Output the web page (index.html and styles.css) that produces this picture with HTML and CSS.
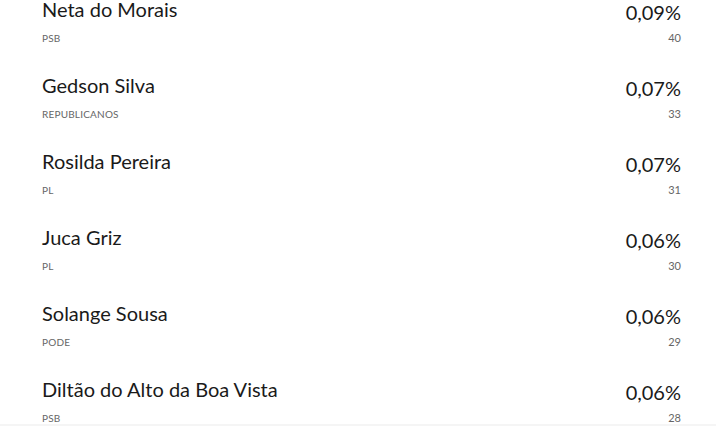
FILE: index.html
```html
<!DOCTYPE html>
<html lang="pt-BR">
<head>
<meta charset="utf-8">
<link rel="stylesheet" href="styles.css">
</head>
<body>
<main class="page">
  <ul class="list">
    <li class="row">
      <div class="info"><span class="name">Neta do Morais</span><span class="party">PSB</span></div>
      <div class="result"><span class="pct">0,09%</span><span class="votes">40</span></div>
    </li>
    <li class="row">
      <div class="info"><span class="name">Gedson Silva</span><span class="party">REPUBLICANOS</span></div>
      <div class="result"><span class="pct">0,07%</span><span class="votes">33</span></div>
    </li>
    <li class="row">
      <div class="info"><span class="name">Rosilda Pereira</span><span class="party">PL</span></div>
      <div class="result"><span class="pct">0,07%</span><span class="votes">31</span></div>
    </li>
    <li class="row">
      <div class="info"><span class="name">Juca Griz</span><span class="party">PL</span></div>
      <div class="result"><span class="pct">0,06%</span><span class="votes">30</span></div>
    </li>
    <li class="row">
      <div class="info"><span class="name">Solange Sousa</span><span class="party">PODE</span></div>
      <div class="result"><span class="pct">0,06%</span><span class="votes">29</span></div>
    </li>
    <li class="row">
      <div class="info"><span class="name">Diltão do Alto da Boa Vista</span><span class="party">PSB</span></div>
      <div class="result"><span class="pct">0,06%</span><span class="votes">28</span></div>
    </li>
  </ul>
  <div class="footer-band"></div>
</main>
</body>
</html>
```
FILE: styles.css
```css
html, body {
  margin: 0;
  padding: 0;
  background: #fff;
}
body {
  font-family: "Lato", "Open Sans", sans-serif;
  color: #1a1a1a;
  overflow: hidden;
  height: 426px;
}
.page {
  display: flex;
  flex-direction: column;
}
.list {
  list-style: none;
  margin: -3px 0 0 0;
  padding: 0 35px 0 42px;
}
.row {
  display: flex;
  justify-content: space-between;
  height: 76px;
}
.row:last-child {
  height: 47px;
}
.info, .result {
  display: flex;
  flex-direction: column;
}
.result {
  align-items: flex-end;
  padding-top: 3px;
}
.name {
  font-size: 20px;
  line-height: 24px;
}
.party {
  font-size: 10px;
  line-height: 12px;
  margin-top: 11px;
  color: #666;
  letter-spacing: 0.2px;
}
.pct {
  font-size: 20px;
  line-height: 24px;
}
.votes {
  font-size: 11px;
  line-height: 14px;
  margin-top: 7px;
  color: #666;
}
.footer-band {
  height: 10px;
  background: #f5f5f5;
}
```
